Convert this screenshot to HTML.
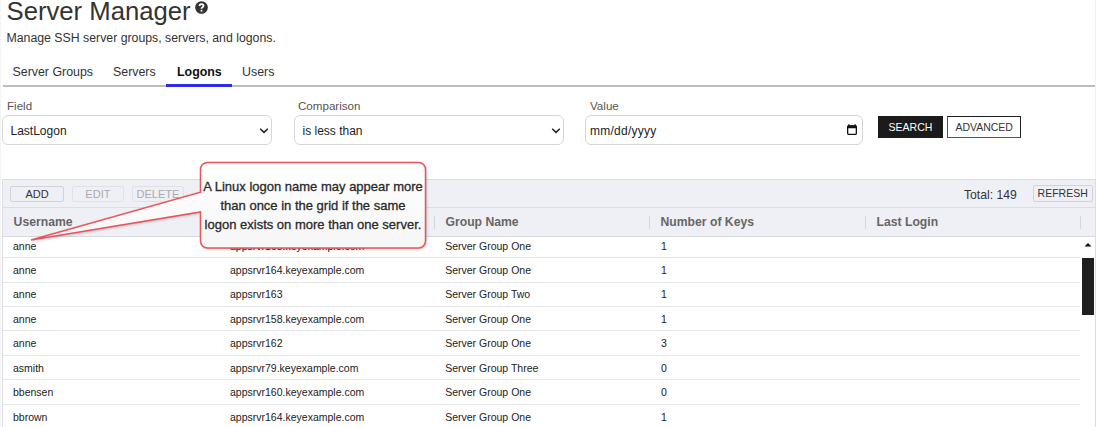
<!DOCTYPE html>
<html><head><meta charset="utf-8">
<style>
*{box-sizing:border-box;margin:0;padding:0}
html,body{width:1096px;height:427px;overflow:hidden;background:#fff;font-family:"Liberation Sans",sans-serif;color:#333}
.a{position:absolute;white-space:nowrap}
#edge{position:absolute;left:0;top:0;width:1px;height:427px;background:#f4f4f4}
h1{position:absolute;left:6.5px;top:-3.6px;font-size:25.7px;font-weight:normal;color:#333;line-height:30px}
.help{position:absolute;left:195px;top:1.2px;width:12.5px;height:12.5px;border-radius:50%;background:#333;color:#fff;font-size:10px;font-weight:bold;text-align:center;line-height:13px}
.sub{left:6.5px;top:31px;font-size:12.3px;line-height:15px;color:#333}
.tab{top:64.5px;font-size:12.4px;line-height:15px;color:#333}
.tabline{position:absolute;left:3px;top:85px;width:1092px;height:2px;background:#bdbdbd}
.tabsel{position:absolute;left:166px;top:84px;width:65.5px;height:3px;background:#2d2de0}
.lbl{top:98.5px;font-size:11.6px;line-height:14px;color:#555}
.sel{position:absolute;top:115px;height:30px;border:1px solid #d6d6d6;border-radius:6px;background:#fff}
.sel span{position:absolute;left:7.5px;top:7.8px;font-size:12px;line-height:15px;color:#222}
.chev{position:absolute;right:1px;top:11px}
.btn{position:absolute;top:116px;height:22.3px;font-size:10.5px;line-height:22px;text-align:center}
#grid{position:absolute;left:2px;top:179px;width:1094px;height:260px;border:1px solid #dcdde2;background:#fff}
.tb{position:absolute;left:0;top:0;width:100%;height:28px;background:#eff0f5;border-bottom:1px solid #dcdde2}
.gb{position:absolute;top:5.5px;height:16.3px;border:1px solid #d2d3d8;border-radius:2px;background:#eff0f5;font-size:11px;line-height:14.5px;text-align:center;color:#333}
.gb.dis{color:#aaa;border-color:#e0e1e6}
.hd{position:absolute;left:0;top:28px;width:100%;height:29px;background:#eff0f5;border-bottom:1px solid #d8d9de}
.hc{position:absolute;top:7px;font-size:12.2px;font-weight:bold;color:#666;line-height:14px}
.hs{position:absolute;top:8px;width:1px;height:13px;background:#d5d6dc}
.row{position:absolute;left:0;width:1077px;height:24.45px;border-bottom:1px solid #e6e7ea}
.c{position:absolute;top:5.8px;font-size:10.5px;line-height:13px;color:#222}
.ct{position:absolute;left:200px;width:226px;text-align:center;font-size:13px;line-height:15px;color:#2a2a2a;white-space:nowrap;transform:scaleX(1.0);transform-origin:113px 0;-webkit-text-stroke:0.3px #2a2a2a}
</style></head><body>
<div id="edge"></div><div style="position:absolute;left:1095px;top:0;width:1px;height:427px;background:#f2f2f2"></div>
<h1>Server Manager</h1>
<svg style="position:absolute;left:194.6px;top:1.3px" width="13" height="13" viewBox="0 0 13 13"><circle cx="6.5" cy="6.5" r="6.35" fill="#333"/><path d="M4.5,5.1 C4.5,3.6 5.4,3 6.5,3 C7.7,3 8.5,3.7 8.5,4.7 C8.5,5.7 7.8,6 7.2,6.4 C6.7,6.7 6.5,7 6.5,7.8" fill="none" stroke="#fff" stroke-width="1.75"/><rect x="5.6" y="8.8" width="1.8" height="1.8" fill="#fff"/></svg>
<div class="a sub">Manage SSH server groups, servers, and logons.</div>

<div class="a tab" style="left:12.5px">Server Groups</div>
<div class="a tab" style="left:113px">Servers</div>
<div class="a tab" style="left:177px;font-weight:bold;color:#111">Logons</div>
<div class="a tab" style="left:242px">Users</div>
<div class="tabline"></div>
<div class="tabsel"></div>

<div class="a lbl" style="left:7px">Field</div>
<div class="a lbl" style="left:298px">Comparison</div>
<div class="a lbl" style="left:590px">Value</div>

<div class="sel" style="left:2px;width:270px"><span>LastLogon</span><svg class="chev" width="12" height="8" viewBox="0 0 12 8"><path d="M2.2 1.8 L6 5.4 L9.8 1.8" fill="none" stroke="#222" stroke-width="1.5"/></svg></div>
<div class="sel" style="left:294px;width:270px"><span>is less than</span><svg class="chev" width="12" height="8" viewBox="0 0 12 8"><path d="M2.2 1.8 L6 5.4 L9.8 1.8" fill="none" stroke="#222" stroke-width="1.5"/></svg></div>
<div class="sel" style="left:585px;width:278px"><span style="left:4px;letter-spacing:0.25px">mm/dd/yyyy</span>
<svg style="position:absolute;left:261px;top:8px" width="10" height="11" viewBox="0 0 10 11"><rect x="0.65" y="2" width="8.7" height="8.35" rx="1.2" fill="none" stroke="#111" stroke-width="1.3"/><rect x="0.2" y="1.4" width="9.6" height="2.8" rx="0.8" fill="#111"/><rect x="1.3" y="0.2" width="1.2" height="2" fill="#111"/><rect x="7.5" y="0.2" width="1.2" height="2" fill="#111"/></svg></div>

<div class="btn" style="left:878px;width:65px;background:#1b1b1b;color:#fff">SEARCH</div>
<div class="btn" style="left:947.4px;width:73.6px;border:1.3px solid #222;border-left-color:#555;border-bottom:1.8px solid #555;color:#333;line-height:21px">ADVANCED</div>

<div id="grid">
  <div class="tb">
    <div class="gb" style="left:7.3px;width:53.4px">ADD</div>
    <div class="gb dis" style="left:68.5px;width:52.8px">EDIT</div>
    <div class="gb dis" style="left:128.5px;width:52.8px">DELETE</div>
    <div class="a" style="left:961px;top:8px;font-size:12.2px;line-height:14px;color:#333">Total: 149</div>
    <div class="gb" style="left:1029.6px;top:5.4px;width:60.2px;height:16.8px;font-size:10.5px;line-height:15.5px">REFRESH</div>
  </div>
  <div class="hd">
    <div class="hc" style="left:10.6px">Username</div>
    <div class="hs" style="left:431px"></div><div class="hc" style="left:442.5px">Group Name</div>
    <div class="hs" style="left:646px"></div><div class="hc" style="left:657.5px">Number of Keys</div>
    <div class="hs" style="left:862px"></div><div class="hc" style="left:873.5px">Last Login</div>
    <div class="hs" style="left:1077px"></div>
  </div>
  <div style="position:absolute;left:0;top:57px;width:1091px;height:203px;overflow:hidden">
<div class="row" style="top:-3.30px"><div class="c" style="left:10px">anne</div><div class="c" style="left:227px">appsrvr165.keyexample.com</div><div class="c" style="left:442.2px">Server Group One</div><div class="c" style="left:658px">1</div></div>
<div class="row" style="top:21.15px"><div class="c" style="left:10px">anne</div><div class="c" style="left:227px">appsrvr164.keyexample.com</div><div class="c" style="left:442.2px">Server Group One</div><div class="c" style="left:658px">1</div></div>
<div class="row" style="top:45.60px"><div class="c" style="left:10px">anne</div><div class="c" style="left:227px">appsrvr163</div><div class="c" style="left:442.2px">Server Group Two</div><div class="c" style="left:658px">1</div></div>
<div class="row" style="top:70.05px"><div class="c" style="left:10px">anne</div><div class="c" style="left:227px">appsrvr158.keyexample.com</div><div class="c" style="left:442.2px">Server Group One</div><div class="c" style="left:658px">1</div></div>
<div class="row" style="top:94.50px"><div class="c" style="left:10px">anne</div><div class="c" style="left:227px">appsrvr162</div><div class="c" style="left:442.2px">Server Group One</div><div class="c" style="left:658px">3</div></div>
<div class="row" style="top:118.95px"><div class="c" style="left:10px">asmith</div><div class="c" style="left:227px">appsrvr79.keyexample.com</div><div class="c" style="left:442.2px">Server Group Three</div><div class="c" style="left:658px">0</div></div>
<div class="row" style="top:143.40px"><div class="c" style="left:10px">bbensen</div><div class="c" style="left:227px">appsrvr160.keyexample.com</div><div class="c" style="left:442.2px">Server Group One</div><div class="c" style="left:658px">0</div></div>
<div class="row" style="top:167.85px"><div class="c" style="left:10px">bbrown</div><div class="c" style="left:227px">appsrvr164.keyexample.com</div><div class="c" style="left:442.2px">Server Group One</div><div class="c" style="left:658px">1</div></div>
<div class="row" style="top:192.30px"><div class="c" style="left:10px">bbrown</div><div class="c" style="left:227px">appsrvr165.keyexample.com</div><div class="c" style="left:442.2px">Server Group One</div><div class="c" style="left:658px">1</div></div>
</div>
  <div style="position:absolute;left:1079px;top:206px;width:12px;height:57px;background:#1f1f1f;top:77.5px"></div>
  <svg style="position:absolute;left:1081px;top:63.2px" width="8" height="4" viewBox="0 0 8 4"><path d="M0.5 3.5 L4 0 L7.5 3.5Z" fill="#111"/></svg>
</div>

<svg style="position:absolute;left:0;top:0;filter:drop-shadow(1px 1.5px 1.2px rgba(0,40,40,.2))" width="440" height="260" viewBox="0 0 440 260">
<defs><linearGradient id="cg" x1="0" y1="0" x2="0" y2="1"><stop offset="0" stop-color="#ffffff"/><stop offset="1" stop-color="#f6f6f6"/></linearGradient></defs>
<path d="M207.5,162.5 H418.5 A7,7 0 0 1 425.5,169.5 V241 A7,7 0 0 1 418.5,248 H207.5 A7,7 0 0 1 200.5,241 V212 L31,240 L200.5,192.3 V169.5 A7,7 0 0 1 207.5,162.5 Z" fill="url(#cg)" stroke="#ec545c" stroke-width="1.5" stroke-linejoin="miter"/>
</svg>
<div class="ct" style="top:179.3px">A Linux logon name may appear more</div>
<div class="ct" style="top:198.3px">than once in the grid if the same</div>
<div class="ct" style="top:216.9px">logon exists on more than one server.</div>
</body></html>
